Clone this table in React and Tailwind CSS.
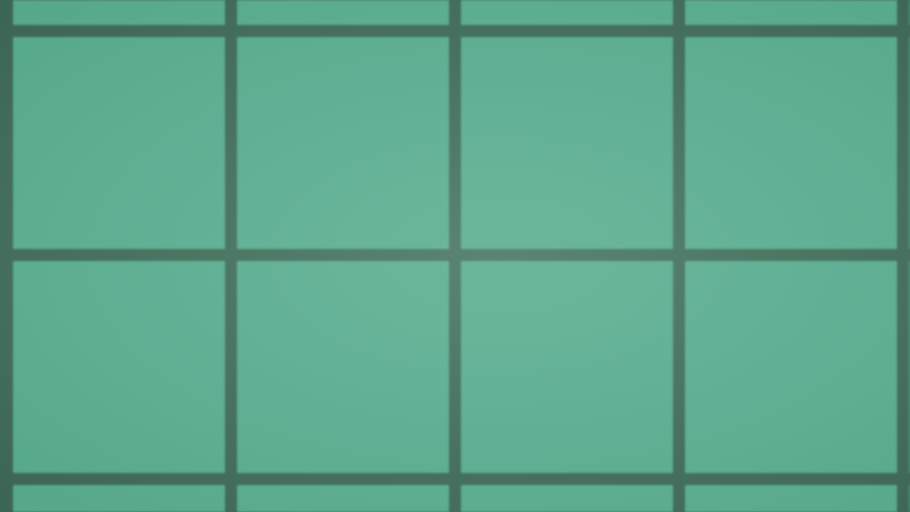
const ROWS = 4;
const COLS = 5;

export default function App() {
  const tiles = Array.from({ length: ROWS * COLS }, (_, i) => i);

  return (
    <div className="w-[910px] h-[512px] overflow-hidden bg-[radial-gradient(ellipse_at_55%_50%,#5b8474_0%,#48725f_55%,#3c6453_100%)] bg-fixed">
      {/* tiled wall, lit from the middle */}
      <div className="grid grid-cols-[repeat(5,212px)] gap-[12px] ml-[13px] mt-[-187px] blur-[1.2px]">
        {tiles.map((i) => (
          <div
            key={i}
            className="h-[212px] bg-[radial-gradient(ellipse_at_55%_50%,#6cb79c_0%,#62b196_45%,#56a889_100%)] bg-fixed"
          />
        ))}
      </div>
    </div>
  );
}
